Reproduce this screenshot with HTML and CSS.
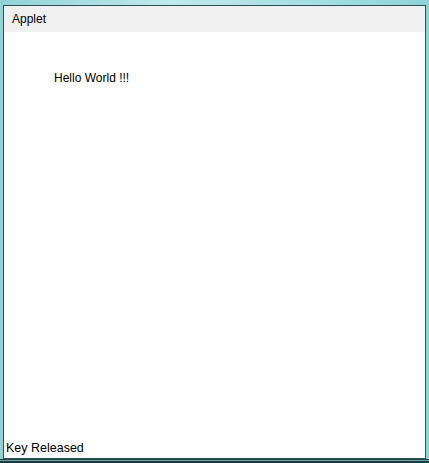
FILE: index.html
```html
<!DOCTYPE html>
<html>
<head>
<meta charset="utf-8">
<link rel="stylesheet" href="styles.css">
</head>
<body>
<div class="desk">
  <div class="frame">
    <div class="titlebar">Applet</div>
    <div class="content">
      <div class="hello">Hello World !!!</div>
      <div class="status">Key Released</div>
    </div>
  </div>
  <div class="bottom"></div>
</div>
</body>
</html>
```
FILE: styles.css
```css
html, body {
  margin: 0;
  padding: 0;
  width: 429px;
  height: 463px;
  overflow: hidden;
}
body {
  background: linear-gradient(90deg, #8fd3d7 0%, #bfe9eb 40%, #a6e0e3 70%, #8ed3d7 100%);
  font-family: "Liberation Sans", Arial, sans-serif;
  color: #000;
}
.desk {
  padding: 5px 3px 0 3px;
  display: flex;
  flex-direction: column;
}
.frame {
  width: 421px;
  height: 452px;
  border: 1px solid #2d5153;
  display: flex;
  flex-direction: column;
  background: #fff;
}
.titlebar {
  height: 26px;
  background: #f0f0f0;
  font-size: 12px;
  line-height: 26px;
  padding-left: 8px;
  box-sizing: border-box;
}
.content {
  flex: 1;
  background: #fff;
  display: flex;
  flex-direction: column;
  justify-content: space-between;
}
.hello {
  font-size: 12px;
  margin: 39px 0 0 50px;
}
.status {
  font-size: 12.5px;
  margin: 0 0 3px 2px;
}
.bottom {
  height: 4px;
  margin: 0 -3px;
  background: linear-gradient(#1f4446 0 1px, #6fa5a8 1px 2px, #1d3a3c 2px 4px);
}
```
